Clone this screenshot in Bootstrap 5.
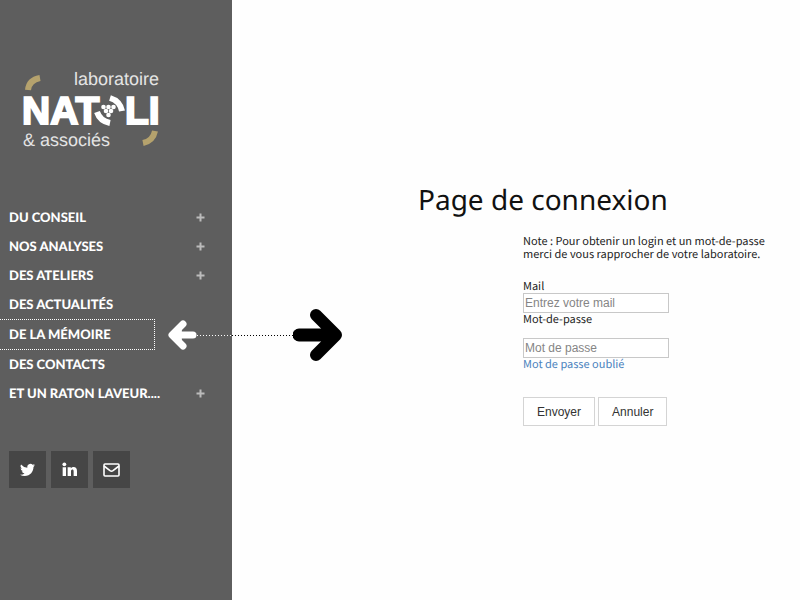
<!DOCTYPE html>
<html lang="fr">
<head>
<meta charset="utf-8">
<meta name="viewport" content="width=device-width, initial-scale=1">
<title>Laboratoire Natoli &amp; associés – Page de connexion</title>
<link rel="stylesheet" href="https://cdn.jsdelivr.net/npm/bootstrap@5.3.0/dist/css/bootstrap.min.css">
<style>
  body { background: #fefefe; color: #222; font-family: "Noto Sans CJK JP", "Noto Sans", sans-serif; font-size: 11px; line-height: 13px; text-rendering: geometricPrecision; }
  .sidebar { flex: 0 0 29%; background: #5e5e5e; color: #fff; padding-top: 64px; }
  .brand-logo { margin-left: 20px; width: 144px; }
  .menu { margin-top: 47px; }
  .menu-row { display: flex; align-items: center; height: 29px; padding: 0 27px 0 9px; }
  .menu-link { color: #fff; text-decoration: none; font: 900 13px/29px "Lato Black", Lato, sans-serif; flex: 1; white-space: nowrap; }
  .menu-row.current { height: 31px; margin-right: 77px; border: 1px dotted #fff; border-left: 0; }
  .toggle-sub { border: 0; padding: 0; background: none; color: #bbb; display: flex; }
  .social { margin: 43px 0 0 9px; gap: 5px; }
  .social a { width: 37px; height: 37px; background: #464646; color: #fff; }
  .pointer-line { position: absolute; left: 168px; top: 307px; display: flex; align-items: center; height: 56px; }
  .dots { height: 1px; background: repeating-linear-gradient(90deg, currentColor 0 1px, transparent 1px 3px); }
  .dots-light { width: 35px; color: #fff; }
  .dots-dark { width: 61px; color: #000; }
  .login { padding: 182px 32px 32px 186px; }
  .login h1 { font: 400 28px/36px "Noto Sans", sans-serif; color: #111; margin: 0 0 17px; white-space: nowrap; }
  .login-form { margin-left: 105px; max-width: 240px; }
  .login-form p { margin-bottom: 19px; white-space: nowrap; }
  .field { display: block; width: 146px; height: 20px; padding: 1px 1px; border: 1px solid #c8c8c8; border-radius: 0; background: #fff; font: 12px/16px "Liberation Sans", Arial, sans-serif; color: #333; }
  .field::placeholder { color: #858585; opacity: 1; }
  .login-form label { display: block; }
  .pass-field { margin-top: 12px; }
  .forgot { color: #4a82bd; text-decoration: none; }
  .actions { gap: 3px; margin-top: 26px; }
  .action { border: 1px solid #d4d4d4; border-radius: 0; background: #fff; color: #333; font: 12px/16px "Liberation Sans", Arial, sans-serif; height: 29px; padding: 0 13px; }
</style>
</head>
<body>
<div class="d-flex min-vh-100 position-relative">
  <aside class="sidebar">
    <svg class="brand-logo d-block" viewBox="0 0 144 92" role="img" aria-label="Laboratoire Natoli et associés">
      <g font-family="Liberation Sans, Arial, sans-serif" font-size="18" fill="#e4e4e4">
        <text x="54" y="21">laboratoire</text>
        <text x="3" y="82">&amp; associés</text>
      </g>
      <g font-family="Liberation Sans, Arial, sans-serif" font-weight="700" font-size="39" fill="#fff" stroke="#fff" stroke-width="2">
        <text x="2" y="60">NAT</text>
        <text x="105" y="60">LI</text>
      </g>
      <path d="M8 26Q9 16 20 14" fill="none" stroke="#b5a26d" stroke-width="6"/>
      <path d="M135 67Q133 77 123 79" fill="none" stroke="#b5a26d" stroke-width="6"/>
      <path d="M77 48Q80 57 90 59" fill="none" stroke="#fff" stroke-width="6"/>
      <path d="M90 34Q100 37 102 47" fill="none" stroke="#fff" stroke-width="6"/>
      <g fill="#fff"><circle cx="83.500" cy="43" r="2.300"/><circle cx="88.500" cy="43" r="2.300"/><circle cx="93.500" cy="43" r="2.300"/><circle cx="86" cy="47" r="2.300"/><circle cx="91" cy="47" r="2.300"/><circle cx="88.500" cy="51" r="2.300"/></g>
    </svg>
    <nav class="menu" aria-label="Menu principal">
      <div class="menu-row"><a class="menu-link" href="#">DU CONSEIL</a><button class="toggle-sub" type="button" aria-label="Ouvrir"><svg width="9" height="9" viewBox="0 0 9 9"><path d="M4.500 .5v8M.5 4.500h8" stroke="currentColor" stroke-width="2"/></svg></button></div>
      <div class="menu-row"><a class="menu-link" href="#">NOS ANALYSES</a><button class="toggle-sub" type="button" aria-label="Ouvrir"><svg width="9" height="9" viewBox="0 0 9 9"><path d="M4.500 .5v8M.5 4.500h8" stroke="currentColor" stroke-width="2"/></svg></button></div>
      <div class="menu-row"><a class="menu-link" href="#">DES ATELIERS</a><button class="toggle-sub" type="button" aria-label="Ouvrir"><svg width="9" height="9" viewBox="0 0 9 9"><path d="M4.500 .5v8M.5 4.500h8" stroke="currentColor" stroke-width="2"/></svg></button></div>
      <div class="menu-row"><a class="menu-link" href="#">DES ACTUALITÉS</a></div>
      <div class="menu-row current"><a class="menu-link" href="#" aria-current="page">DE LA MÉMOIRE</a></div>
      <div class="menu-row"><a class="menu-link" href="#">DES CONTACTS</a></div>
      <div class="menu-row"><a class="menu-link" href="#">ET UN RATON LAVEUR....</a><button class="toggle-sub" type="button" aria-label="Ouvrir"><svg width="9" height="9" viewBox="0 0 9 9"><path d="M4.500 .5v8M.5 4.500h8" stroke="currentColor" stroke-width="2"/></svg></button></div>
    </nav>
    <div class="social d-flex">
      <a class="d-flex align-items-center justify-content-center" href="#" aria-label="Twitter"><svg width="15" height="15" viewBox="0 0 16 16" fill="currentColor"><path d="M5.026 15c6.038 0 9.341-5.003 9.341-9.334 0-.14 0-.282-.006-.422A6.700 6.700 0 0 0 16 3.542a6.700 6.700 0 0 1-1.889.518 3.300 3.300 0 0 0 1.447-1.817 6.500 6.500 0 0 1-2.087.793A3.286 3.286 0 0 0 7.875 6.030 9.300 9.300 0 0 1 1.112 2.600a3.290 3.290 0 0 0 1.018 4.382A3.300 3.300 0 0 1 .64 6.575v.045a3.290 3.290 0 0 0 2.632 3.218 3.200 3.200 0 0 1-.865.115 3 3 0 0 1-.614-.057 3.280 3.280 0 0 0 3.067 2.277A6.600 6.600 0 0 1 .78 13.580a6 6 0 0 1-.78-.045A9.340 9.340 0 0 0 5.026 15"/></svg></a>
      <a class="d-flex align-items-center justify-content-center" href="#" aria-label="LinkedIn"><svg width="15" height="15" viewBox="0 0 16 16" fill="currentColor"><circle cx="2.500" cy="2.500" r="2"/><path d="M.7 5.500h3.600V15H.7zM6 5.500h3.400v1.400c.6-1 1.600-1.600 3-1.600 2.200 0 3.600 1.400 3.600 4.200V15h-3.600V10c0-1.400-.5-2.100-1.300-2.100-1 0-1.500.8-1.500 2.100V15H6z"/></svg></a>
      <a class="d-flex align-items-center justify-content-center" href="#" aria-label="Courriel"><svg width="17" height="14" viewBox="0 0 17 14" fill="none" stroke="currentColor" stroke-width="1.600"><rect x="1" y="1" width="15" height="12" rx="1"/><path d="M1 3l6 4.700q1.500 1 3 0L16 3"/></svg></a>
    </div>
  </aside>

  <div class="pointer-line" aria-hidden="true">
    <svg width="29" height="32" viewBox="0 0 29 32" fill="none" stroke="#fff" stroke-linejoin="round" stroke-linecap="round"><path d="M15 5L4 16l11 11" stroke-width="7"/><path d="M6 16h19" stroke-width="7"/><path d="M13 10L6 16l7 6z" fill="#fff"/></svg>
    <span class="dots dots-light"></span><span class="dots dots-dark"></span>
    <svg width="50" height="56" viewBox="0 0 50 56" fill="none" stroke="#000" stroke-linejoin="round" stroke-linecap="round"><path d="M23 8l20 20-20 20" stroke-width="12"/><path d="M6 28h32" stroke-width="13"/><path d="M29 17l11 11-11 11z" fill="#000"/></svg>
  </div>

  <main class="login flex-grow-1">
    <h1>Page de connexion</h1>
    <form class="login-form">
      <p>Note : Pour obtenir un login et un mot-de-passe<br>merci de vous rapprocher de votre laboratoire.</p>
      <label for="mail">Mail</label>
      <input class="field" id="mail" type="email" placeholder="Entrez votre mail">
      <label for="pass">Mot-de-passe</label>
      <input class="field pass-field" id="pass" type="password" placeholder="Mot de passe">
      <a class="forgot" href="#">Mot de passe oublié</a>
      <div class="actions d-flex">
        <button class="action" type="submit">Envoyer</button>
        <button class="action" type="reset">Annuler</button>
      </div>
    </form>
  </main>
</div>
<script src="https://cdn.jsdelivr.net/npm/bootstrap@5.3.0/dist/js/bootstrap.bundle.min.js"></script>
</body>
</html>
